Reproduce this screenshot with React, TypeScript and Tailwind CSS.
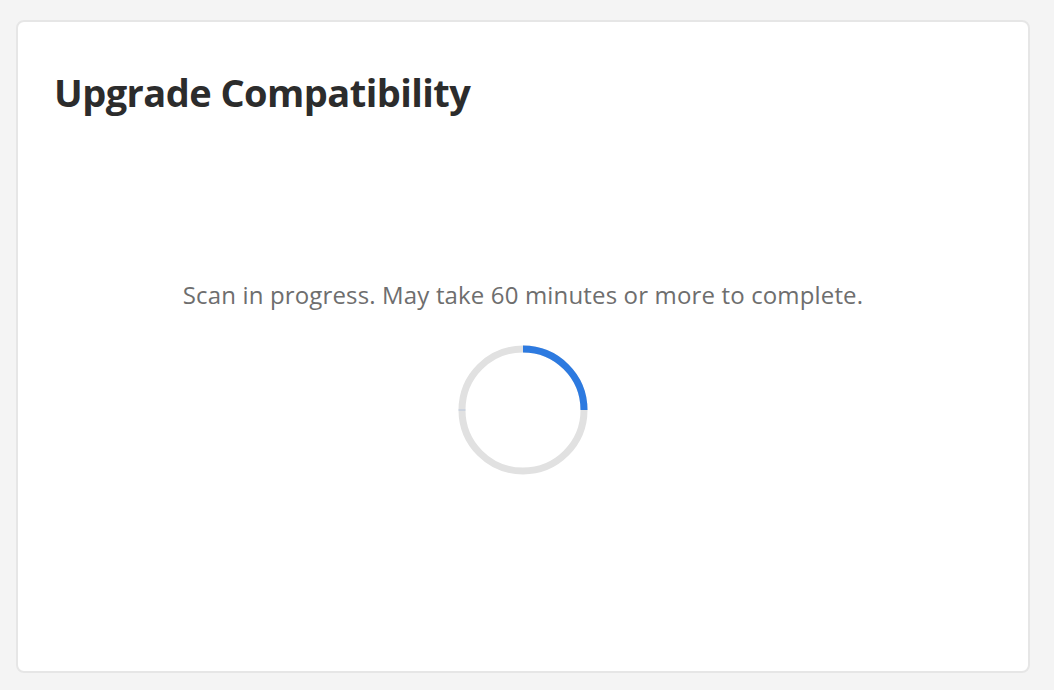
const Spinner = () => {
    // Track circle with a quarter arc from 12 o'clock to 3 o'clock
    const size = 130;
    const r = 61;
    const c = size / 2;
    return (
        <svg width={size} height={size} viewBox={`0 0 ${size} ${size}`}>
            <circle cx={c} cy={c} r={r} fill="none" stroke="#e1e1e1" strokeWidth={7} />
            <path
                d={`M ${c} ${c - r} A ${r} ${r} 0 0 1 ${c + r} ${c}`}
                fill="none"
                stroke="#2d7ae0"
                strokeWidth={7}
            />
            <line x1={c - r - 3.5} y1={c} x2={c - r + 3.5} y2={c} stroke="#b8c6dc" strokeWidth={1} />
        </svg>
    );
};

export default function App() {
    return (
        <div
            className="min-h-screen w-full bg-[#f4f4f4] pl-4 pt-5"
            style={{ fontFamily: '"Open Sans", "Noto Sans", sans-serif' }}
        >
            {/* Card */}
            <div className="flex h-[653px] w-[1014px] flex-col rounded-lg border-2 border-[#e6e6e6] bg-white">
                <h1 className="pl-[36px] pt-[46px] text-[38px] font-bold leading-[48px] tracking-[-0.55px] text-[#2c2c2c]">
                    Upgrade Compatibility
                </h1>

                {/* Scan status */}
                <div className="mt-[163px] flex flex-col items-center">
                    <p className="text-[24px] leading-[32px] tracking-[0.15px] text-[#6e6e6e]">
                        Scan in progress. May take 60 minutes or more to complete.
                    </p>
                    <div className="mt-[34px]">
                        <Spinner />
                    </div>
                </div>
            </div>
        </div>
    );
}
